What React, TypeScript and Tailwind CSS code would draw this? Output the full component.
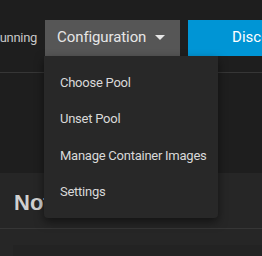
const items = ["Choose Pool", "Unset Pool", "Manage Container Images", "Settings"];

export default function App() {
  return (
    <div className="relative w-[262px] h-[256px] overflow-hidden bg-[#1e1e1e] font-['Roboto',sans-serif]">
      {/* Toolbar */}
      <div className="flex items-center h-[73px] border-b border-[#363636] pt-[20px] pb-[17px] -ml-[8px]">
        <span className="shrink-0 whitespace-nowrap text-[13px] tracking-[-0.3px] text-[#c6c6c6] mr-[8px]">Running</span>
        <button className="shrink-0 flex items-center h-[36px] w-[135px] bg-[#565656] pl-[12px] text-[15px] tracking-[-0.1px] text-[#e6e6e6]">
          Configuration
          <span className="ml-[9px] w-0 h-0 border-l-[5px] border-r-[5px] border-t-[5px] border-l-transparent border-r-transparent border-t-[#e6e6e6]" />
        </button>
        <button className="ml-[8px] h-[36px] w-[120px] shrink-0 bg-[#0095d5] pl-[44px] text-left text-[15px] text-white whitespace-nowrap">
          Discover
        </button>
      </div>

      {/* Card */}
      <div className="mt-[100px] bg-[#262626] h-[100px]">
        <div className="h-[56px] border-b border-[#363636] pl-[14px] pt-[19px]">
          <h2 className="font-['Liberation_Sans',sans-serif] font-bold text-[22px] leading-none text-[#d0d0d0] whitespace-nowrap">Notifications</h2>
        </div>
        <div className="ml-[13px] mt-[16px] h-[20px] bg-[#232323]" />
      </div>

      {/* Dropdown menu */}
      <div className="absolute left-[44px] top-[56px] w-[174px] rounded-b-[4px] bg-[#282828] py-[8px] shadow-[0_4px_10px_rgba(0,0,0,0.5)]">
        {items.map((item) => (
          <div key={item} className="flex items-center h-[36.5px] pl-[16px] whitespace-nowrap text-[13px] tracking-[-0.25px] text-[#d9d9d9]">
            {item}
          </div>
        ))}
      </div>
    </div>
  );
}
